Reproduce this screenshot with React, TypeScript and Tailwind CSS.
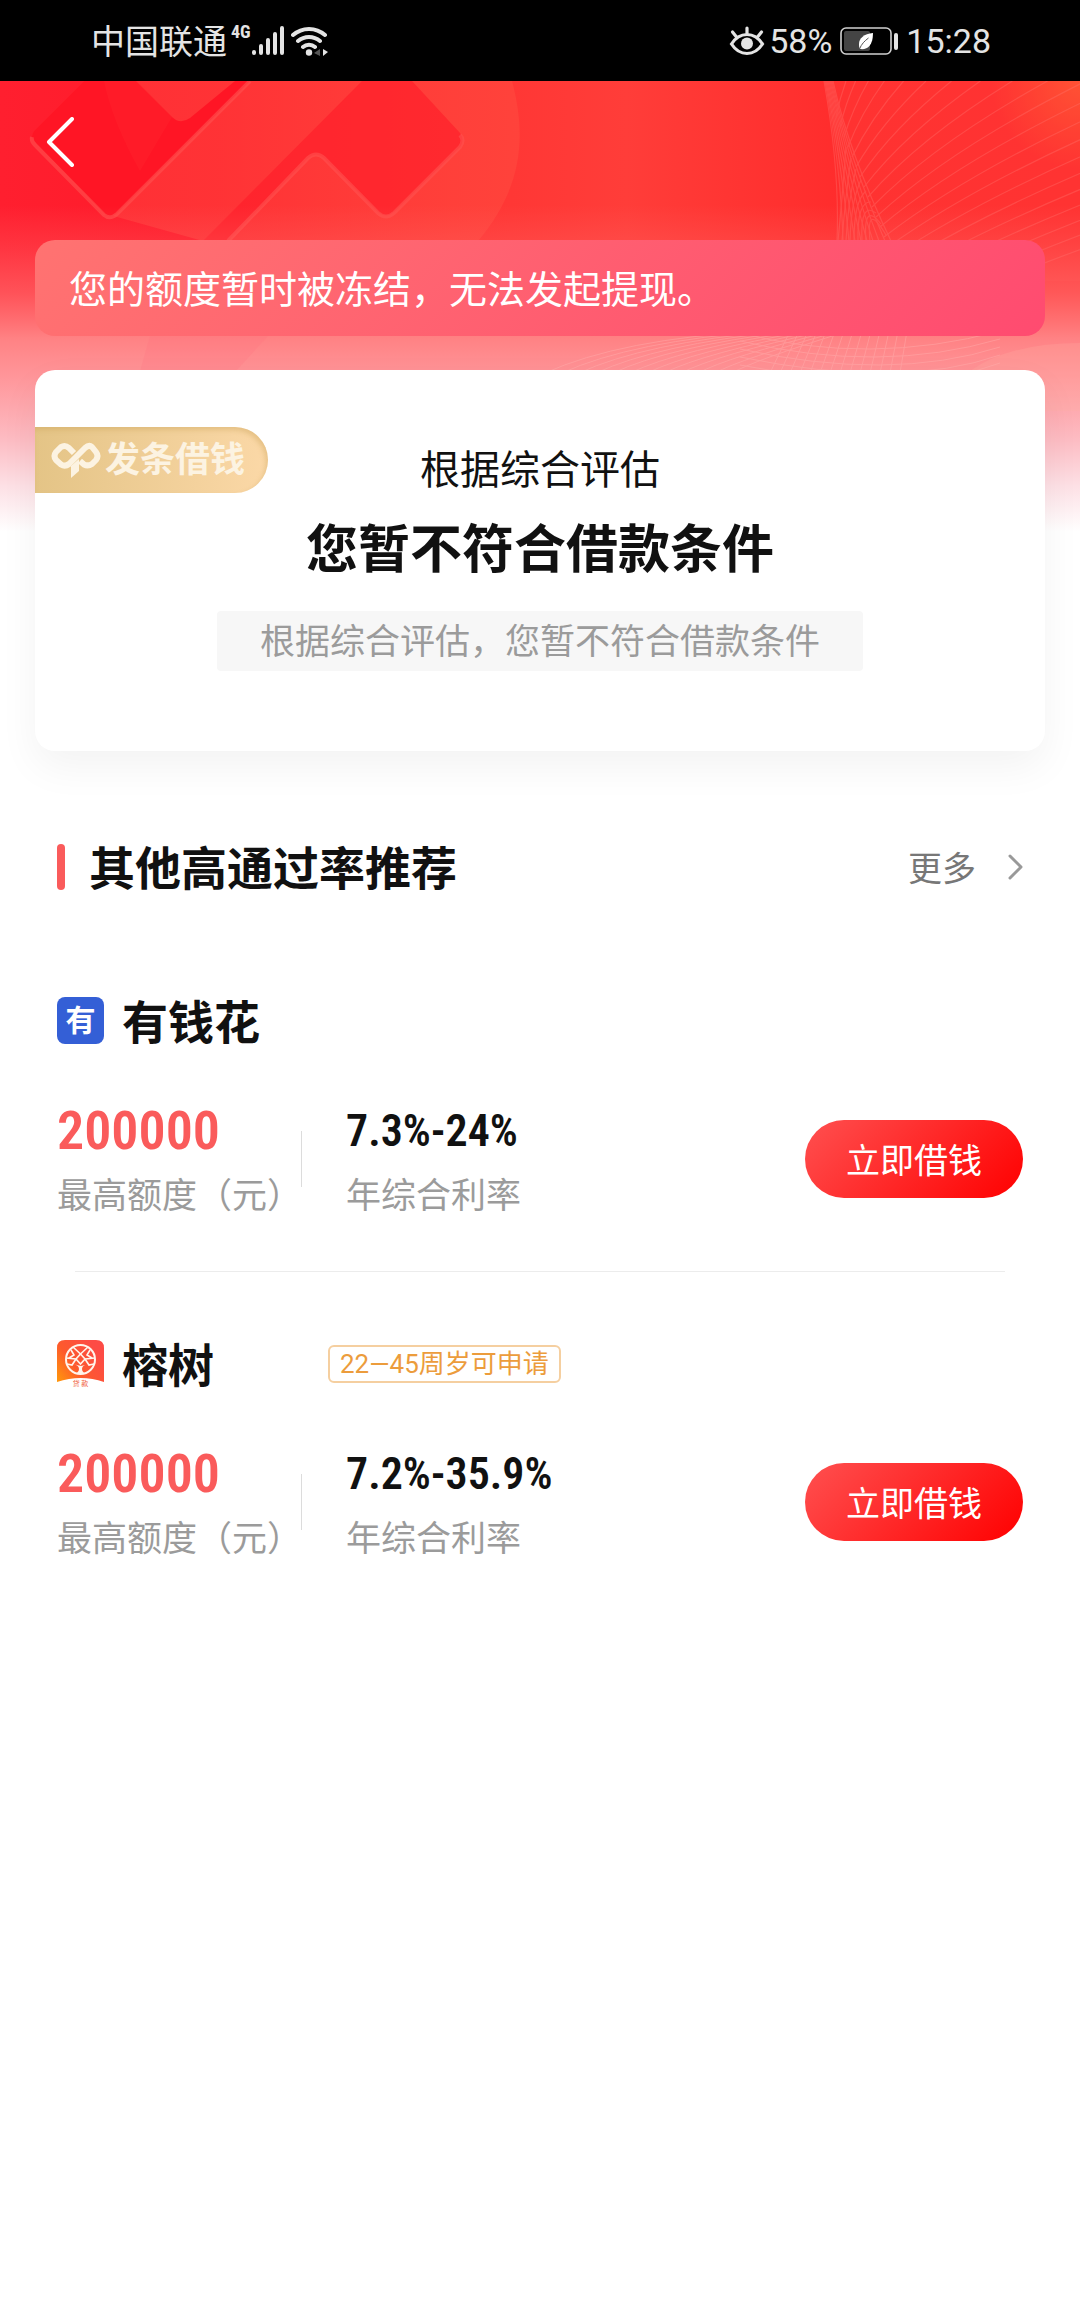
import type { ReactNode } from "react";

type Offer = {
  id: string;
  name: string;
  icon: ReactNode;
  tag?: string;
  amount: string;
  rate: string;
};

const range = (n: number) => Array.from({ length: n }, (_, i) => i);

function SignalIcon() {
  return (
    <svg width="34" height="32" viewBox="0 0 34 32" stroke="#e4e4e4" strokeWidth="4" strokeLinecap="round">
      <path d="M3 27v1M10 21v7M17 15v13M24 9v19M31 3v25" />
    </svg>
  );
}

function WifiIcon() {
  return (
    <svg width="38" height="32" viewBox="0 0 38 32" fill="none" stroke="#e4e4e4" strokeWidth="4" strokeLinecap="round">
      <path d="M2 10a24 24 0 0 1 32 0M7 16a17 17 0 0 1 22 0M12 22a9 9 0 0 1 12 0" />
      <circle cx="18" cy="27.500" r="3.200" fill="#e4e4e4" stroke="none" />
      <path d="M29 24v7l-6-3z" fill="#555" stroke="none" />
      <path d="M32 24v7l5-4z" fill="#e4e4e4" stroke="none" />
    </svg>
  );
}

function EyeIcon() {
  return (
    <svg width="36" height="32" viewBox="0 0 36 32" fill="none" stroke="#e4e4e4" strokeWidth="3.200" strokeLinecap="round">
      <path d="M2.500 19C7 12 12 9.500 18 9.500S29 12 33.500 19C29 26 24 28.500 18 28.500S7 26 2.500 19z" />
      <path d="M18 3v5M3.500 7l4 5M32.500 7l-4 5" />
      <circle cx="18" cy="18.500" r="6" fill="#e4e4e4" stroke="none" />
    </svg>
  );
}

function BatteryIcon() {
  return (
    <svg width="58" height="28" viewBox="0 0 58 28" fill="none">
      <rect x="1" y="1" width="50" height="26" rx="5" stroke="#d0d0d0" strokeWidth="1.600" />
      <rect x="4" y="4" width="26" height="20" rx="2" fill="#444" />
      <path d="M33 6c-9 1-14 5-14 11 0 2 0 3 1 5 7 1 13-3 13-16z" fill="#fff" />
      <path d="M19.500 22c2-5 5-8 9-11" stroke="#555" />
      <rect x="54" y="6" width="4" height="17" rx="2" fill="#e4e4e4" />
    </svg>
  );
}

function StatusBar() {
  return (
    <div className="flex h-[81px] items-center justify-between bg-black pr-[89px] pl-[91px] text-[34px] leading-none text-[#e4e4e4]">
      <div className="flex items-center">
        <span className="pt-0.5">中国联通</span>
        <span className="ml-1 self-start font-['Roboto_Condensed'] text-lg leading-none font-bold">4G</span>
        <SignalIcon />
        <span className="ml-1.5">
          <WifiIcon />
        </span>
      </div>
      <div className="flex items-center">
        <EyeIcon />
        <span className="ml-1">58%</span>
        <span className="ml-2">
          <BatteryIcon />
        </span>
        <span className="ml-2">15:28</span>
      </div>
    </div>
  );
}

function HeroBackground() {
  return (
    <svg
      className="absolute inset-x-0 top-0 h-[460px] w-full"
      viewBox="0 0 1080 460"
      preserveAspectRatio="none"
      fill="none"
      aria-hidden="true"
    >
      <defs>
        <linearGradient id="base" x1="0" x2="1" y1="0" y2="0">
          <stop offset="0" stopColor="#ff1f2f" />
          <stop offset="0.200" stopColor="#ff1a29" />
          <stop offset="0.420" stopColor="#ff3433" />
          <stop offset="0.580" stopColor="#ff3d39" />
          <stop offset="0.780" stopColor="#ff2c2c" />
          <stop offset="1" stopColor="#ff2d2e" />
        </linearGradient>
        <linearGradient id="fade" x1="0" x2="0" y1="0" y2="1">
          <stop offset="0.270" stopColor="#ff7474" stopOpacity="0" />
          <stop offset="0.360" stopColor="#ff7474" stopOpacity="0.250" />
          <stop offset="0.460" stopColor="#ff7474" stopOpacity="0.600" />
          <stop offset="0.560" stopColor="#ff8284" />
          <stop offset="0.640" stopColor="#ff9599" />
          <stop offset="0.780" stopColor="#fdbcc3" />
          <stop offset="0.880" stopColor="#fde0e5" />
          <stop offset="0.980" stopColor="#fff" />
        </linearGradient>
        <linearGradient id="band" x1="0" x2="1" y1="0" y2="0">
          <stop offset="0" stopColor="#ff3438" />
          <stop offset="1" stopColor="#ff463d" />
        </linearGradient>
        <radialGradient id="corner" cx="1080" cy="0" r="90" gradientUnits="userSpaceOnUse">
          <stop offset="0" stopColor="#ff5430" />
          <stop offset="1" stopColor="#ff5430" stopOpacity="0" />
        </radialGradient>
      </defs>
      <rect width="1080" height="460" fill="url(#base)" />

      {/* oversized brand mark, cropped by the top edge */}
      <path d="M84 0H512C528 60 520 110 478 160L400 290H110L203 160 110 134 104 134 34 60Q30 56 34 50z" fill="url(#band)" opacity="0.750" />
      <path d="M84 0 34 50Q30 56 34 60L104 133Q110 138 116 133L250 0H235L190 37Q180 44 172 36L136 0z" fill="#ff1122" opacity="0.850" />
      <path d="M110 0H138L172 36 140 90Q112 40 104 0z" fill="#ff3035" opacity="0.250" />
      <path d="M362 0 200 163 140 230H170L228 160 308 77Q316 70 324 77L378 131Q386 138 394 131L460 66Q465 59 460 52L412 0z" fill="#ff1b28" opacity="0.620" />
      <path d="M32 56Q31 60 35 64L104 134Q110 139 117 133L250 0" stroke="#ff5150" strokeWidth="4" opacity="0.600" />
      <path d="M228 160 308 77Q316 70 324 77L378 132Q386 139 394 132L460 66Q465 59 460 54" stroke="#ff5150" strokeWidth="4" opacity="0.600" />

      <rect x="980" width="100" height="100" fill="url(#corner)" />

      {/* woven light threads on the right */}
      <path d="M824 0Q846 90 837 160L834 200H1080V0z" fill="#ff4a44" opacity="0.200" />
      <g stroke="#ff7a74" strokeWidth="1.200" opacity="0.320">
        {range(21).map((i) => {
          const x = 836 + i * 4;
          const y = 36 + i * 10;
          const endX = 846 + i * 8 + i * i * 1.6;
          return <path key={i} d={`M${x} ${y}Q${x + (endX - x) * 0.35} ${y * 0.5} ${endX} 0`} />;
        })}
        {range(10).map((i) => (
          <path key={i} d={`M${824 + i} 0Q${840 + i} ${90 - i * 2} ${837 + i * 6} 160`} />
        ))}
        {range(9).map((i) => (
          <path key={i} d={`M${846 + i * 5} ${66 + i * 11}Q${842 + i * 3} 120 ${838 + i * 4} 160`} />
        ))}
      </g>
      <rect width="1080" height="460" fill="url(#fade)" />
      <path d="M268 255 236 290H140L150 255z" fill="#ff6478" opacity="0.150" />
      <path d="M970 290Q1010 262 1080 262V330H1000z" fill="#ffb0a4" opacity="0.250" />
      <g stroke="#ffb4b2" opacity="0.400">
        {range(12).map((i) => (
          <path key={i} d={`M${545 + i * 17} 292Q${620 + i * 12} ${258 + i * 2} ${760 + i * 8} 250`} />
        ))}
        {range(14).map((i) => (
          <path key={i} d={`M${790 + i * 9} 250L${770 + i * 10} 292`} />
        ))}
        {range(5).map((i) => (
          <path key={i} d={`M740 ${252 + i * 8}Q${870 + i * 10} ${285 + i * 8} 1000 ${250 + i * 8}`} />
        ))}
      </g>
    </svg>
  );
}

function BrandBadge() {
  return (
    <div className="absolute top-[57px] left-0 flex h-[66px] w-[233px] items-center rounded-r-full bg-linear-to-r from-[#e4c486] to-[#fbd8a7] pl-4 text-[35px] leading-none font-bold text-[#fcf3e2] shadow-[inset_-2px_3px_5px_#c99f5566]">
      <svg width="50" height="36" viewBox="0 0 50 36" fill="none" stroke="#fcf3e2" strokeWidth="6" strokeLinejoin="round">
        <path d="M23 11 18 6Q14 2.500 10 5L5 10Q2 14 5 18L10 22.500Q14 25 18 22L34 6Q38 2.500 41 5L45 10Q48 14 45 18L41 22Q37 24.500 33 22.500L29 19" />
        <path d="M20 24 28 17V29L20 36z" fill="#fcf3e2" stroke="none" />
      </svg>
      <span className="ml-1">发条借钱</span>
    </div>
  );
}

function YouIcon() {
  return (
    <span className="flex size-[47px] items-center justify-center rounded-lg bg-[#345fd6] text-[30px] leading-none font-bold text-white" aria-hidden="true">
      有
    </span>
  );
}

function TreeIcon() {
  return (
    <svg width="47" height="47" viewBox="0 0 47 47" fill="none" aria-hidden="true">
      <defs>
        <linearGradient id="tree" x1="0" y1="40" x2="40" y2="10" gradientUnits="userSpaceOnUse">
          <stop stopColor="#ff960c" />
          <stop offset="0.450" stopColor="#fd5a2c" />
          <stop offset="1" stopColor="#fd4b45" />
        </linearGradient>
      </defs>
      <path d="M8 0H39Q47 0 47 8V42Q24 34 0 42V8Q0 0 8 0z" fill="url(#tree)" />
      <circle cx="23.500" cy="19.500" r="14.500" stroke="#fff5ec" strokeWidth="2" />
      <g stroke="#fff5ec" strokeWidth="1.600">
        <path d="M23.500 14 28 19 23.500 24 19 19z" />
        <path d="M23.500 14 16 7M23.500 14 31 7M19 19 9 18M28 19 38 18M14 10 17 15 12 18M33 10 30 15 35 18M19 19 15 25 10 24M28 19 32 25 37 24" />
      </g>
      <path d="M16 24Q22 25 22 29 22 32 18 34H29Q25 32 25 29 25 25 31 24L24 26z" fill="#fff5ec" />
      <text x="23.500" y="46" textAnchor="middle" fontSize="7" fill="#f0603c">
        贷 款
      </text>
    </svg>
  );
}

const offers: Offer[] = [
  { id: "youqianhua", name: "有钱花", icon: <YouIcon />, amount: "200000", rate: "7.3%-24%" },
  { id: "rongshu", name: "榕树", icon: <TreeIcon />, tag: "22—45周岁可申请", amount: "200000", rate: "7.2%-35.9%" },
];

function OfferRow({ offer }: { offer: Offer }) {
  return (
    <li className="group">
      <div className="flex h-[47px] items-center">
        <div className="flex w-[271px] items-center gap-[18px]">
          {offer.icon}
          <h3 className="pt-1 text-[46px] leading-none font-bold">{offer.name}</h3>
        </div>
        {offer.tag ? (
          <span className="rounded-md border-2 border-[#f5cfa0] px-2.5 text-[26px] leading-[34px] text-[#ec9c3c]">
            {offer.tag}
          </span>
        ) : null}
      </div>
      <div className="mt-[57px] flex items-center">
        <dl className="flex w-[244px] flex-col-reverse">
          <dt className="mt-4 text-[35px] leading-10 whitespace-nowrap text-[#9b9b9b]">最高额度（元）</dt>
          <dd className="font-['Roboto_Condensed'] text-[54px] leading-[60px] font-semibold text-[#fa5b5b]">{offer.amount}</dd>
        </dl>
        <div className="h-14 w-px bg-[#dcdcdc]" />
        <dl className="ml-11 flex flex-col-reverse">
          <dt className="mt-4 text-[35px] leading-10 text-[#9b9b9b]">年综合利率</dt>
          <dd className="font-['Roboto_Condensed'] text-[44px] leading-[60px] font-semibold">{offer.rate}</dd>
        </dl>
        <button
          type="button"
          className="ml-auto h-[78px] w-[218px] rounded-full bg-linear-[135deg] from-[#ff5050] to-[#ff0000] pt-1 text-[34px] text-white"
        >
          立即借钱
        </button>
      </div>
      <hr className="mx-[18px] mt-[54px] mb-[68px] border-[#ececec] group-last:hidden" />
    </li>
  );
}

export default function App() {
  return (
    <div className="min-h-screen bg-white font-['Roboto','Noto_Sans_CJK_SC',sans-serif] text-[#111]">
      <StatusBar />
      <div className="relative">
        <HeroBackground />
        <div className="relative px-[35px]">
          <header className="flex h-[159px] items-start pt-9">
            <button type="button" aria-label="返回" className="ml-2">
              <svg width="36" height="50" viewBox="0 0 36 50" fill="none" stroke="#fff" strokeWidth="4" strokeLinecap="round" strokeLinejoin="round">
                <path d="M29 2 6 25 29 48" />
              </svg>
            </button>
          </header>
          <p className="rounded-[20px] bg-linear-[135deg] from-[#ff7371] to-[#ff4b70] px-[34px] pt-[22px] pb-[18px] text-[38px] leading-14 text-white">
            您的额度暂时被冻结，无法发起提现。
          </p>
          <section className="relative mt-[34px] flex flex-col items-center rounded-[20px] bg-white pt-[73px] pb-20 shadow-[0_16px_40px_#0000000d]">
            <BrandBadge />
            <p className="text-[40px] leading-14">根据综合评估</p>
            <h1 className="mt-5 text-[52px] leading-16 font-bold">您暂不符合借款条件</h1>
            <p className="mt-7 rounded bg-[#f7f7f7] px-[43px] pt-1 text-[35px] leading-14 text-[#9b9b9b]">
              根据综合评估，您暂不符合借款条件
            </p>
          </section>
        </div>
      </div>
      <main className="px-[57px] pt-[93px]">
        <div className="flex h-[46px] items-center">
          <span className="h-full w-2 rounded-full bg-[#fa5b5b]" />
          <h2 className="ml-6 pt-1 text-[46px] leading-none font-bold">其他高通过率推荐</h2>
          <a href="#more" className="ml-auto flex items-center gap-8 text-[34px] text-[#777]">
            <span className="pt-1">更多</span>
            <svg width="15" height="26" viewBox="0 0 15 26" fill="none" stroke="#999" strokeWidth="3" strokeLinecap="round" strokeLinejoin="round">
              <path d="M2 2 13 13 2 24" />
            </svg>
          </a>
        </div>
        <ul className="mt-[107px]">
          {offers.map((offer) => (
            <OfferRow key={offer.id} offer={offer} />
          ))}
        </ul>
      </main>
    </div>
  );
}
